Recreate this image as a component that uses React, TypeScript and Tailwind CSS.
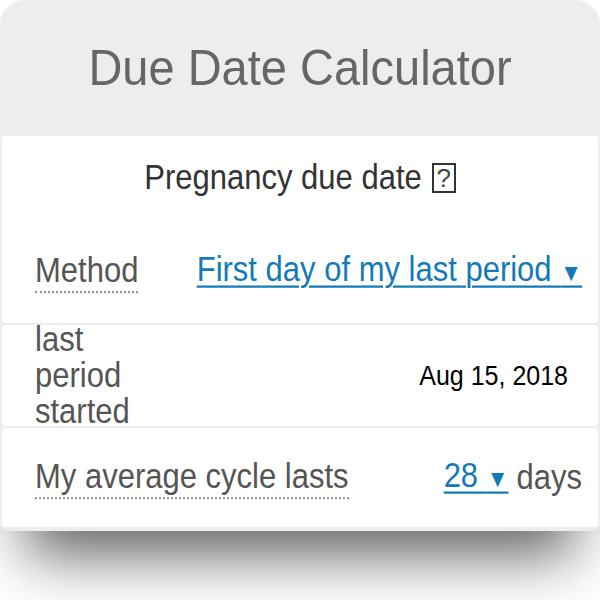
import React from 'react';

const font = { fontFamily: '"Liberation Sans", Arial, sans-serif' };

// the reference glyphs are a touch taller than Liberation Sans at the same width
const tall = 'inline-block scale-y-[1.12]';

const App = () => {
  return (
    <div className="w-[600px] h-[600px] bg-white overflow-hidden" style={font}>
      <div className="bg-[#ededed] rounded-t-[24px] rounded-b-[8px] px-[2px] pb-[4px] shadow-[0_50px_56px_-26px_rgba(0,0,0,0.62)]">
        {/* Header */}
        <div className="h-[136px] flex items-center justify-center">
          <h1 className="text-[47px] leading-none text-[#666] pb-[2px] inline-block scale-y-[1.05]">Due Date Calculator</h1>
        </div>

        <div className="flex flex-col gap-[2px]">
          {/* Block 1: title + method */}
          <div className="bg-white rounded-[4px] h-[187px] flex flex-col">
            <div className="h-[84px] flex items-center justify-center text-[31px] leading-[36px] text-[#333]">
              <span className={tall}>Pregnancy due date</span>
              <span className="ml-[10px] inline-flex items-center justify-center w-[24px] h-[30px] border-2 border-[#333] text-[26px] leading-none text-[#444] font-light">
                ?
              </span>
            </div>
            <div className="h-[103px] flex items-center justify-between pl-[33px] pr-[16px]">
              <span className={`${tall} text-[31px] leading-[36px] text-[#555] border-b-2 border-dotted border-[#999]`}>
                Method
              </span>
              <span className={`${tall} text-[31px] leading-[36px] text-[#137ab8] underline decoration-2 underline-offset-[4px]`}>
                First day of my last period <span className="text-[22px]">▼</span>
              </span>
            </div>
          </div>

          {/* Block 2: last period started */}
          <div className="bg-white rounded-[4px] h-[101px] flex items-center justify-between pl-[33px] pr-[30px]">
            <span className={`${tall} w-[110px] text-[31px] leading-[32px] text-[#555]`}>last period started</span>
            <span className={`${tall} text-[25px] text-black`}>Aug 15, 2018</span>
          </div>

          {/* Block 3: cycle */}
          <div className="bg-white rounded-[4px] h-[99px] flex items-center justify-between pl-[33px] pr-[16px]">
            <span className={`${tall} text-[31px] leading-[36px] text-[#555] border-b-2 border-dotted border-[#999]`}>
              My average cycle lasts
            </span>
            <div className="inline-flex items-center gap-[8px] text-[31px] leading-[36px] scale-y-[1.12]">
              <span className="text-[#137ab8] underline decoration-2 underline-offset-[4px]">
                28 <span className="text-[22px]">▼</span>
              </span>
              <span className="text-[#555]">days</span>
            </div>
          </div>
        </div>
      </div>
    </div>
  );
};

export default App;
